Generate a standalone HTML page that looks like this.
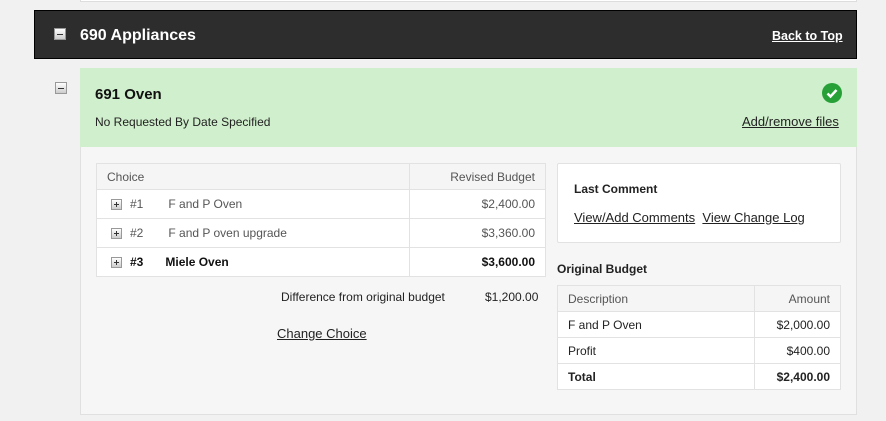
<!DOCTYPE html>
<html><head><meta charset="utf-8"><style>
*{box-sizing:border-box;margin:0;padding:0}
body{width:886px;height:421px;background:#f1f1f1;font-family:"Liberation Sans",Arial,sans-serif;color:#222;position:relative;overflow:hidden;font-size:12px}
.a{position:absolute}
.ico{position:absolute;width:12px;height:12px;background:linear-gradient(#fff,#ccc);border:1px solid #999}
.ico:after{content:"";position:absolute;left:2px;top:4.5px;width:6px;height:1.5px;background:#333}
.pl{width:11px;height:11px}
.pl:after{left:2px;top:4px;width:5px;height:1px}
.pl:before{content:"";position:absolute;left:4px;top:2px;width:1px;height:5px;background:#333}
table{border-collapse:collapse;position:absolute;background:#fff}
td{border:1px solid #e2e2e2;padding:0 10px;font-size:12px}
u{text-decoration:underline}
</style></head><body>
<div class="a" style="left:80px;top:-10px;width:777px;height:12px;background:#fff;border:1px solid #ddd"></div>
<div class="a" style="left:34px;top:10px;width:823px;height:49px;background:#2d2d2d;border:1px solid #000"></div>
<div class="ico" style="left:54px;top:28px"></div>
<div class="a" style="left:80px;top:27px;color:#fff;font-weight:bold;font-size:16px">690 Appliances</div>
<div class="a" style="left:772px;top:29px;color:#fff;font-weight:bold;font-size:12.5px"><u>Back to Top</u></div>
<div class="ico" style="left:55px;top:82px"></div>
<div class="a" style="left:80px;top:68px;width:777px;height:79px;background:#d0efcc"></div>
<div class="a" style="left:95px;top:86px;font-weight:bold;font-size:15px;color:#111">691 Oven</div>
<div class="a" style="left:95px;top:115px;font-size:12px">No Requested By Date Specified</div>
<div class="a" style="left:822px;top:83px;width:20px;height:20px;border-radius:50%;background:#27a137"></div>
<svg class="a" style="left:822px;top:83px" width="20" height="20"><path d="M5.5 10.5l3 3 6-6.5" stroke="#fff" stroke-width="2.5" fill="none"/></svg>
<div class="a" style="left:742px;top:114px;font-size:13px"><u>Add/remove files</u></div>
<div class="a" style="left:80px;top:147px;width:777px;height:268px;background:#f6f6f6;border:1px solid #e0e0e0;border-top:none"></div>
<table style="left:96px;top:163px;width:450px">
<tr style="height:26px;background:#f5f5f5;color:#555"><td>Choice</td><td style="text-align:right;width:136px">Revised Budget</td></tr>
<tr style="height:29px;color:#555"><td><span class="ico pl" style="position:relative;display:inline-block;vertical-align:middle;margin-right:8px;margin-left:4px"></span>#1<span style="margin-left:25px">F and P Oven</span></td><td style="text-align:right">$2,400.00</td></tr>
<tr style="height:29px;color:#555"><td><span class="ico pl" style="position:relative;display:inline-block;vertical-align:middle;margin-right:8px;margin-left:4px"></span>#2<span style="margin-left:25px">F and P oven upgrade</span></td><td style="text-align:right">$3,360.00</td></tr>
<tr style="height:29px;font-weight:bold;color:#111"><td><span class="ico pl" style="position:relative;display:inline-block;vertical-align:middle;margin-right:8px;margin-left:4px"></span>#3<span style="margin-left:22px">Miele Oven</span></td><td style="text-align:right">$3,600.00</td></tr>
</table>
<div class="a" style="left:281px;top:290px">Difference from original budget</div>
<div class="a" style="left:485px;top:290px">$1,200.00</div>
<div class="a" style="left:277px;top:326px;font-size:13px"><u>Change Choice</u></div>
<div class="a" style="left:557px;top:163px;width:284px;height:80px;background:#fff;border:1px solid #e2e2e2;border-radius:2px"></div>
<div class="a" style="left:574px;top:182px;font-weight:bold">Last Comment</div>
<div class="a" style="left:574px;top:210px;font-size:13px"><u>View/Add Comments</u>&nbsp;&nbsp;<u>View Change Log</u></div>
<div class="a" style="left:557px;top:262px;font-weight:bold">Original Budget</div>
<table style="left:557px;top:285px;width:284px">
<tr style="height:26px;background:#f5f5f5;color:#555"><td>Description</td><td style="text-align:right;width:86px">Amount</td></tr>
<tr style="height:26px"><td>F and P Oven</td><td style="text-align:right">$2,000.00</td></tr>
<tr style="height:26px"><td>Profit</td><td style="text-align:right">$400.00</td></tr>
<tr style="height:26px;font-weight:bold"><td>Total</td><td style="text-align:right">$2,400.00</td></tr>
</table>
</body></html>
